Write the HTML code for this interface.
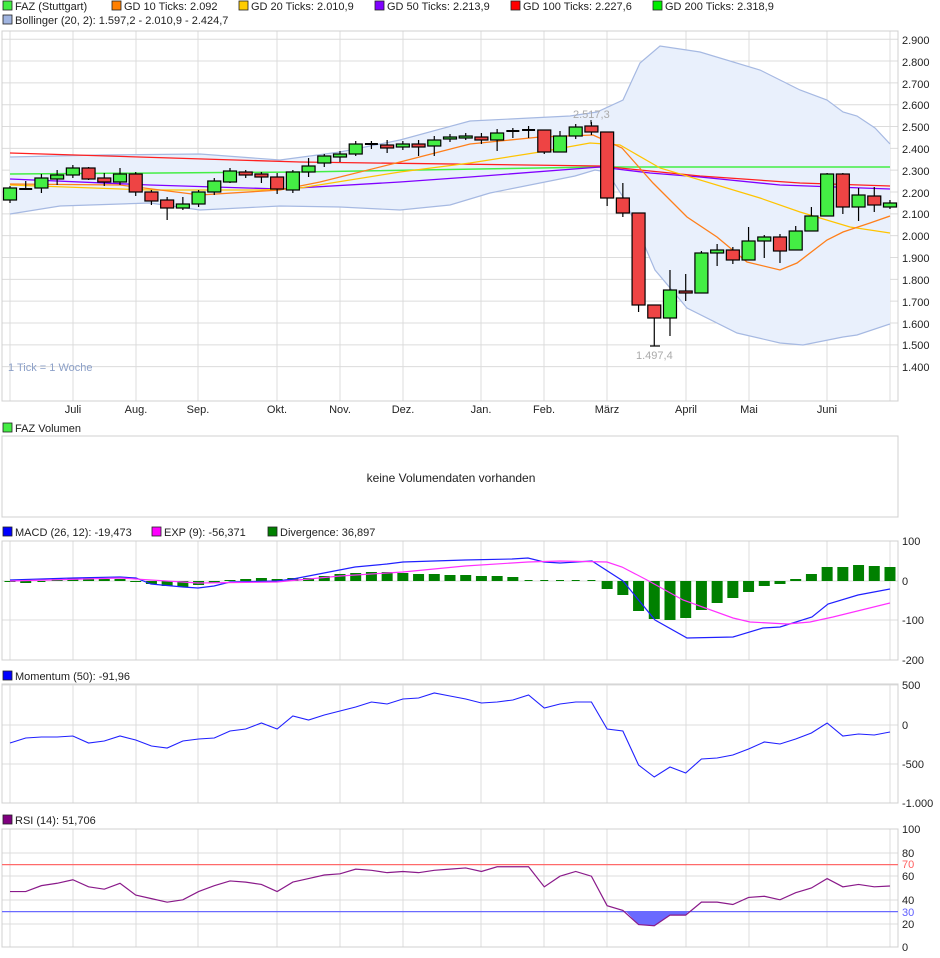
<!DOCTYPE html>
<html><head><meta charset="utf-8"><style>
body{margin:0;background:#fff;width:940px;height:958px;overflow:hidden;font-family:"Liberation Sans",sans-serif;}
svg{position:absolute;left:0;top:0}
text{font-family:"Liberation Sans",sans-serif;font-size:11px;fill:#222}
</style></head><body>
<svg id="s" width="940" height="958" xmlns="http://www.w3.org/2000/svg">
<g id="g"></g>
<g id="t">
<rect x="3" y="1" width="9" height="9" fill="#44ee44" stroke="#222" stroke-width="0.8"/><text x="15" y="10">FAZ (Stuttgart)</text>
<rect x="112" y="1" width="9" height="9" fill="#ff7f00" stroke="#222" stroke-width="0.8"/><text x="124" y="10">GD 10 Ticks: 2.092</text>
<rect x="239" y="1" width="9" height="9" fill="#ffcc00" stroke="#222" stroke-width="0.8"/><text x="251" y="10">GD 20 Ticks: 2.010,9</text>
<rect x="375" y="1" width="9" height="9" fill="#7f00ff" stroke="#222" stroke-width="0.8"/><text x="387" y="10">GD 50 Ticks: 2.213,9</text>
<rect x="511" y="1" width="9" height="9" fill="#ff0000" stroke="#222" stroke-width="0.8"/><text x="523" y="10">GD 100 Ticks: 2.227,6</text>
<rect x="653" y="1" width="9" height="9" fill="#00ee00" stroke="#222" stroke-width="0.8"/><text x="665" y="10">GD 200 Ticks: 2.318,9</text>
<rect x="3" y="15" width="9" height="9" fill="#a0b4e0" stroke="#222" stroke-width="0.8"/><text x="15" y="24">Bollinger (20, 2): 1.597,2 - 2.010,9 - 2.424,7</text>
<text x="8" y="371" style="fill:#8ca0c8">1 Tick = 1 Woche</text>
<text x="573" y="118" style="fill:#aaa">2.517,3</text>
<text x="636" y="359" style="fill:#aaa">1.497,4</text>
<g text-anchor="middle">
<text x="73" y="413">Juli</text><text x="136" y="413">Aug.</text><text x="198" y="413">Sep.</text><text x="277" y="413">Okt.</text><text x="340" y="413">Nov.</text><text x="403" y="413">Dez.</text><text x="481" y="413">Jan.</text><text x="544" y="413">Feb.</text><text x="607" y="413">März</text><text x="686" y="413">April</text><text x="749" y="413">Mai</text><text x="827" y="413">Juni</text>
</g>
<g>
<text x="902" y="44">2.900</text><text x="902" y="66">2.800</text><text x="902" y="88">2.700</text><text x="902" y="109">2.600</text><text x="902" y="131">2.500</text><text x="902" y="153">2.400</text><text x="902" y="175">2.300</text><text x="902" y="197">2.200</text><text x="902" y="218">2.100</text><text x="902" y="240">2.000</text><text x="902" y="262">1.900</text><text x="902" y="284">1.800</text><text x="902" y="306">1.700</text><text x="902" y="328">1.600</text><text x="902" y="349">1.500</text><text x="902" y="371">1.400</text>
</g>
<rect x="3" y="423" width="9" height="9" fill="#44ee44" stroke="#222" stroke-width="0.8"/><text x="15" y="432">FAZ Volumen</text>
<text x="451" y="482" text-anchor="middle" style="font-size:12px">keine Volumendaten vorhanden</text>
<rect x="3" y="527" width="9" height="9" fill="#0000ff" stroke="#222" stroke-width="0.8"/><text x="15" y="536">MACD (26, 12): -19,473</text>
<rect x="152" y="527" width="9" height="9" fill="#ff00ff" stroke="#222" stroke-width="0.8"/><text x="164" y="536">EXP (9): -56,371</text>
<rect x="268" y="527" width="9" height="9" fill="#008000" stroke="#222" stroke-width="0.8"/><text x="280" y="536">Divergence: 36,897</text>
<text x="902" y="545">100</text><text x="902" y="585">0</text><text x="902" y="624">-100</text><text x="902" y="664">-200</text>
<rect x="3" y="671" width="9" height="9" fill="#0000ff" stroke="#222" stroke-width="0.8"/><text x="15" y="680">Momentum (50): -91,96</text>
<text x="902" y="689">500</text><text x="902" y="729">0</text><text x="902" y="768">-500</text><text x="902" y="807">-1.000</text>
<rect x="3" y="815" width="9" height="9" fill="#800080" stroke="#222" stroke-width="0.8"/><text x="15" y="824">RSI (14): 51,706</text>
<text x="902" y="833">100</text><text x="902" y="857">80</text><text x="902" y="868" style="fill:#ff6060">70</text><text x="902" y="880">60</text><text x="902" y="904">40</text><text x="902" y="916" style="fill:#6060ff">30</text><text x="902" y="928">20</text><text x="902" y="951">0</text>
</g>
</svg>
<script>
var NS="http://www.w3.org/2000/svg",G=document.getElementById('g');
function el(n,a){var e=document.createElementNS(NS,n);for(var k in a)e.setAttribute(k,a[k]);G.appendChild(e);return e;}
function pl(pts,c,w){el('polyline',{points:pts.map(p=>p.join(',')).join(' '),fill:'none',stroke:c,'stroke-width':w||1.3});}
var VX=[10,73,136,198,277,340,403,481,544,607,686,749,827,890];
function panel(y1,y2,hs){
  hs.forEach(y=>el('line',{x1:2,x2:898,y1:y,y2:y,stroke:'#dcdcdc'}));
  VX.forEach(x=>el('line',{x1:x,x2:x,y1:y1,y2:y2,stroke:'#dcdcdc'}));
  el('rect',{x:2,y:y1,width:896,height:y2-y1,fill:'none',stroke:'#d0d0d0'});
}
function X(i){return 10+i*15.714;}
// price panel
var hp=[];for(var k=0;k<16;k++)hp.push(39.2+k*21.83);
panel(31,401,hp);
// bollinger
var up=[[10,157],[100,155],[200,154],[280,160],[340,152],[400,140],[470,121],[530,118],[570,116],[597,112],[623,100],[640,63],[660,46],[700,52],[760,70],[800,90],[827,100],[843,112],[857,116],[875,128],[890,144]];
var lo=[[10,214],[60,206],[150,203],[200,210],[280,206],[340,207],[400,210],[450,205],[490,193],[540,183],[575,176],[595,170],[607,172],[625,200],[655,270],[687,308],[737,333],[780,343],[803,345],[843,337],[857,335],[890,324]];
el('polygon',{points:up.concat(lo.slice().reverse()).map(p=>p.join(',')).join(' '),fill:'#e9f0fc'});
pl(up,'#a6b9e2',1.2);pl(lo,'#a6b9e2',1.2);
pl([[10,174],[300,172],[600,167],[890,167]],'#44ee44',1.5);
pl([[10,153],[300,162],[600,166],[700,176],[800,183],[890,186]],'#ff2020',1.3);
pl([[10,179],[150,185],[280,189],[400,182],[470,177],[600,167],[650,173],[700,177],[780,185],[890,189]],'#8000ff',1.3);
pl([[10,185],[150,190],[260,190],[300,188],[400,172],[470,163],[540,152],[590,143],[620,145],[660,168],[760,198],[800,212],[850,227],[890,233]],'#ffc400',1.2);
pl([[10,184],[120,185],[200,195],[280,190],[320,182],[400,162],[470,144],[540,137],[593,135],[622,148],[653,183],[687,217],[717,237],[747,262],[780,270],[797,263],[827,240],[843,232],[870,223],[890,216]],'#ff7f1a',1.3);
var C=[[188,200,186,203,1],[189,189,181,190,0],[178,188,174,193,1],[175,179,170,185,1],[168,175,165,178,1],[168,179,167,180,2],[178,182,173,186,2],[174,182,168,185,1],[174,192,172,196,2],[192,201,190,205,2],[200,208,197,220,2],[204,208,197,210,1],[192,204,190,207,1],[181,192,178,195,1],[171,182,168,183,1],[172,175,170,178,2],[174,177,172,183,2],[177,189,173,194,2],[172,190,170,193,1],[166,172,158,177,1],[156,163,154,167,1],[154,157,151,162,1],[144,154,141,156,1],[144,145,141,149,0],[145,148,140,153,2],[144,147,141,150,1],[144,147,140,156,2],[140,146,136,156,1],[137,139,134,142,1],[136,138,133,140,1],[137,140,133,144,2],[133,140,129,151,1],[131,132,128,138,0],[130,131,126,138,0],[130,152,131,154,2],[136,152,131,152,1],[127,136,124,139,1],[126,132,122,135,2],[132,198,132,206,2],[198,213,183,217,2],[213,305,213,312,2],[305,318,305,346,2],[290,318,270,336,1],[291,293,274,301,2],[253,293,251,293,1],[250,253,244,266,1],[250,260,247,264,2],[241,260,227,260,1],[237,241,235,258,1],[237,251,234,263,2],[231,250,226,250,1],[216,231,207,231,1],[174,216,173,216,1],[174,207,173,214,2],[195,207,188,221,1],[196,205,187,212,2],[203,207,200,209,1]];
C.forEach(function(c,i){var x=X(i);
 el('line',{x1:x,x2:x,y1:c[2],y2:c[3],stroke:'#000','stroke-width':1.2});
 if(c[4]==0){el('line',{x1:x-6.5,x2:x+6.5,y1:c[0],y2:c[0],stroke:'#000','stroke-width':2});}
 else el('rect',{x:x-6.5,y:c[0],width:13,height:Math.max(c[1]-c[0],2),fill:c[4]==1?'#44ee44':'#ee4444',stroke:'#000','stroke-width':1.2});
});
el('line',{x1:591,x2:591,y1:120,y2:124,stroke:'#000'});
el('line',{x1:650,x2:660,y1:346,y2:346,stroke:'#000','stroke-width':1.2});
// volume
el('rect',{x:2,y:436,width:896,height:81,fill:'none',stroke:'#d0d0d0'});
// MACD
panel(541,660,[581,620]);
var D=[-1,-2,0,2,3,3,2,2,-1,-3,-5,-6,-4,-2,1,2,3,2,3,3,5,7,8,9,9,8,7,7,6,6,5,5,4,0.6,0.6,0.6,0.6,0.6,-8,-14,-30,-38,-39,-37,-29,-22,-17,-11,-5,-3,2,7,14,14,16,15,14];
D.forEach(function(d,i){var x=X(i),h=Math.abs(d);if(h<1)h=1;var w=Math.abs(d)<1?8:11;
 el('rect',{x:x-w/2,y:d>0?581-h:581,width:w,height:h,fill:'#008000'});});
pl([[10,580],[73,578],[120,577],[136,578],[151,584],[183,587],[198,588],[214,586],[230,582],[277,581],[293,579],[324,573],[355,567],[387,564],[403,562],[434,561],[465,560],[512,559],[528,558],[544,562],[560,563],[592,561],[623,581],[655,620],[687,638],[733,637],[763,628],[780,627],[812,617],[828,604],[858,595],[890,589]],'#2020ff',1.2);
pl([[10,581],[120,578],[198,583],[277,582],[340,576],[403,572],[465,566],[528,562],[560,561],[607,562],[622,567],[647,580],[683,600],[733,618],[750,622],[787,624],[810,622],[833,617],[890,603]],'#ff30ff',1.2);
// Momentum
panel(684,803,[685,725,764]);
var M=[743,738,737,737,736,743,741,736,740,746,748,741,739,738,731,729,723,729,716,720,715,711,707,702,704,699,698,693,696,699,703,702,700,695,708,704,702,702,729,731,765,777,767,773,759,758,755,749,742,744,739,733,723,736,734,735,732];
pl(M.map((y,i)=>[X(i),y]),'#2020ff',1.1);
// RSI
panel(829,947,[829,853,876,900,924]);
el('line',{x1:2,x2:898,y1:864.6,y2:864.6,stroke:'#ff6a6a','stroke-width':1.2});
var R=[47,47,52,54,57,51,49,54,44,41,38,40,47,52,56,55,53,47,55,58,61,62,66,65,63,64,63,65,66,67,64,68,68,68,51,60,64,60,35,31,19,18,27,27,38,38,36,42,43,40,46,50,58,51,53,51,51.7];
function ry(v){return 947-v*1.18;}
el('polygon',{points:[[626,911.6],[X(40),ry(19)],[X(41),ry(18)],[X(42),ry(27)],[X(43),ry(27)],[688,911.6]].map(p=>p.join(',')).join(' '),fill:'#6a6aff'});
el('line',{x1:2,x2:898,y1:911.6,y2:911.6,stroke:'#6a6aff','stroke-width':1.2});
pl(R.map((v,i)=>[X(i),ry(v)]),'#8a1a8a',1.2);
</script>
</body></html>
